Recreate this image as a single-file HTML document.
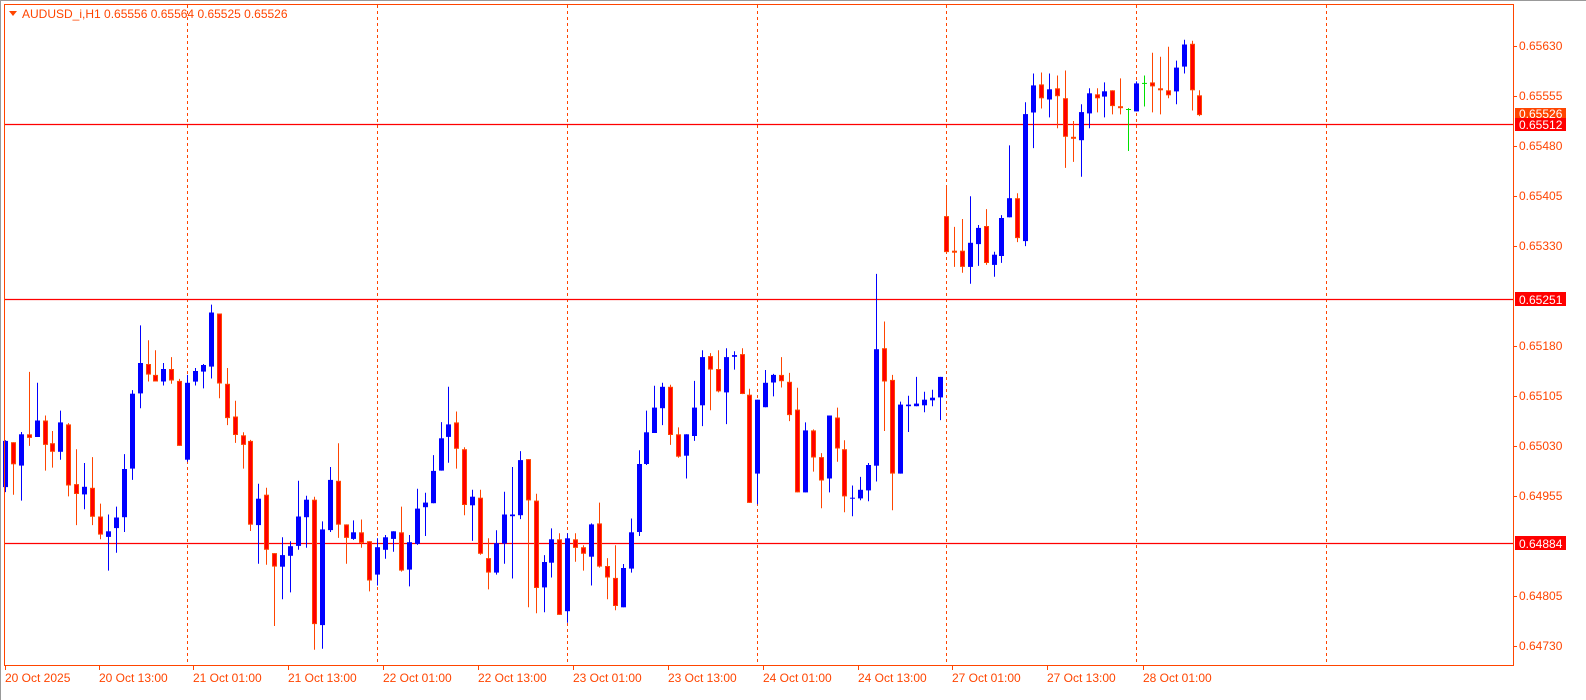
<!DOCTYPE html>
<html><head><meta charset="utf-8"><style>
html,body{margin:0;padding:0;background:#fff;width:1586px;height:700px;overflow:hidden}
svg{display:block;font-family:"Liberation Sans",Arial,sans-serif;font-size:12px}
</style></head><body>
<svg id="s" width="1586" height="700" xmlns="http://www.w3.org/2000/svg">
<rect x="0" y="0" width="1586" height="700" fill="#fff"/>
<line x1="0" y1="0.5" x2="1586" y2="0.5" stroke="#999"/>
<line x1="0.5" y1="0" x2="0.5" y2="700" stroke="#999"/>
<g stroke="#ff4500" stroke-dasharray="3,3" stroke-width="1">
<line x1="187.5" y1="5" x2="187.5" y2="665"/><line x1="377.5" y1="5" x2="377.5" y2="665"/>
<line x1="567.5" y1="5" x2="567.5" y2="665"/><line x1="757.5" y1="5" x2="757.5" y2="665"/>
<line x1="946.5" y1="5" x2="946.5" y2="665"/><line x1="1136.5" y1="5" x2="1136.5" y2="665"/>
<line x1="1326.5" y1="5" x2="1326.5" y2="665"/>
</g>
<g stroke="#ff0000" stroke-width="1.2">
<line x1="4" y1="124.5" x2="1513" y2="124.5"/><line x1="4" y1="299.5" x2="1513" y2="299.5"/><line x1="4" y1="543.5" x2="1513" y2="543.5"/>
</g>
<g id="c"></g>
<rect x="4.5" y="4.5" width="1509" height="661" fill="none" stroke="#ff4500"/>
<g stroke="#ff4500">
<line x1="1513" y1="46.5" x2="1517" y2="46.5"/><line x1="1513" y1="96.5" x2="1517" y2="96.5"/><line x1="1513" y1="146.5" x2="1517" y2="146.5"/><line x1="1513" y1="196.5" x2="1517" y2="196.5"/><line x1="1513" y1="246.5" x2="1517" y2="246.5"/><line x1="1513" y1="346.5" x2="1517" y2="346.5"/><line x1="1513" y1="396.5" x2="1517" y2="396.5"/><line x1="1513" y1="446.5" x2="1517" y2="446.5"/><line x1="1513" y1="496.5" x2="1517" y2="496.5"/><line x1="1513" y1="596.5" x2="1517" y2="596.5"/><line x1="1513" y1="646.5" x2="1517" y2="646.5"/>
<line x1="5.5" y1="665" x2="5.5" y2="670"/><line x1="99.5" y1="665" x2="99.5" y2="670"/><line x1="193.5" y1="665" x2="193.5" y2="670"/><line x1="288.5" y1="665" x2="288.5" y2="670"/><line x1="383.5" y1="665" x2="383.5" y2="670"/><line x1="478.5" y1="665" x2="478.5" y2="670"/><line x1="573.5" y1="665" x2="573.5" y2="670"/><line x1="668.5" y1="665" x2="668.5" y2="670"/><line x1="763.5" y1="665" x2="763.5" y2="670"/><line x1="858.5" y1="665" x2="858.5" y2="670"/><line x1="952.5" y1="665" x2="952.5" y2="670"/><line x1="1047.5" y1="665" x2="1047.5" y2="670"/><line x1="1143.5" y1="665" x2="1143.5" y2="670"/>
</g>
<g fill="#ff4500">
<text x="1519" y="50">0.65630</text><text x="1519" y="100">0.65555</text><text x="1519" y="150">0.65480</text><text x="1519" y="200">0.65405</text><text x="1519" y="250">0.65330</text><text x="1519" y="350">0.65180</text><text x="1519" y="400">0.65105</text><text x="1519" y="450">0.65030</text><text x="1519" y="500">0.64955</text><text x="1519" y="600">0.64805</text><text x="1519" y="650">0.64730</text>
<text x="5" y="682">20 Oct 2025</text><text x="99" y="682">20 Oct 13:00</text><text x="193" y="682">21 Oct 01:00</text><text x="288" y="682">21 Oct 13:00</text><text x="383" y="682">22 Oct 01:00</text><text x="478" y="682">22 Oct 13:00</text><text x="573" y="682">23 Oct 01:00</text><text x="668" y="682">23 Oct 13:00</text><text x="763" y="682">24 Oct 01:00</text><text x="858" y="682">24 Oct 13:00</text><text x="952" y="682">27 Oct 01:00</text><text x="1047" y="682">27 Oct 13:00</text><text x="1143" y="682">28 Oct 01:00</text>
<text x="22" y="18">AUDUSD_i,H1  0.65556 0.65564 0.65525 0.65526</text>
</g>
<path d="M9 11 L17 11 L13 16 Z" fill="#ff4500"/>
<rect x="1515" y="108" width="51" height="12" fill="#ff4500"/>
<text x="1519" y="118" fill="#fff">0.65526</text>
<rect x="1515" y="118" width="51" height="13" fill="#ff0000"/>
<text x="1519" y="129" fill="#fff">0.65512</text>
<rect x="1515" y="292" width="51" height="14" fill="#ff0000"/>
<text x="1519" y="304" fill="#fff">0.65251</text>
<rect x="1515" y="536" width="51" height="14" fill="#ff0000"/>
<text x="1519" y="548" fill="#fff">0.64884</text>
</svg>
<script>
var d1=[["b",467,607,465,622],["r",471,538,471,630],["b",447,542,440,648],["r",447,458,258,482],["b",405,455,291,455],["r",405,479,390,557],["r",474,500,437,548],["b",411,500,375,524],["r",417,602,413,635],["r",598,628,492,722],["b",606,629,534,674],["r",609,697,516,722],["r",696,751,657,765],["b",741,758,690,860],["b",699,731,666,806],["b",552,698,507,743],["b",324,551,313,585],["b",231,323,117,368],["r",234,266,162,287],["r",267,287,192,287],["b",249,287,231,299],["r",249,284,213,294],["r",285,482,279,482],["b",291,524,267,530],["b",255,287,246,299],["b",237,257,234,308],["b",78,242,54,278],["r",81,293,81,338],["r",294,398,246,419],["r",393,449,345,473],["r",450,479,441,551],["r",467,721,464,740],["b",642,722,597,839],["r",630,797,609,842],["r",807,848,807,1028],["b",813,848,759,947],["b",786,815,771,926],["b",696,785,588,797],["b",645,698,633,791],["r",645,1022,636,1100],["b",735,1025,711,1097],["b",585,737,546,743],["r",588,721,474,761],["r",720,761,720,839],["b",744,764,708,767],["r",744,776,705,791],["r",771,890,771,923],["b",789,872,762,905],["b",759,797,752,824],["b",741,764,741,803],["r",744,860,666,863],["b",774,857,752,908],["b",672,779,612,782],["b",654,668,624,755],["b",558,656,510,656],["b",459,557,410,557],["b",417,455,303,533],["r",411,491,378,551],["r",492,661,486,692],["b",636,662,615,770]];
var d2=[["r",729,899,705,902],["r",912,956,852,1007],["b",867,956,828,962],["b",780,868,711,929],["b",780,785,636,974],["b",615,782,588,794],["r",612,737,612,1061],["r",738,1003,717,1079],["b",924,1001,903,1076],["b",855,926,822,971],["r",855,1084,837,1084],["b",852,1073,837,1108],["r",855,881,837,923],["r",879,899,873,950],["b",810,908,807,995],["r",807,938,744,941],["r",936,971,912,1037],["r",972,1057,873,1070],["b",942,1061,930,1061],["b",834,944,792,956],["b",627,833,585,845],["b",531,627,465,630],["b",456,533,390,533],["b",393,458,381,509],["r",393,539,387,569],["r",537,605,516,608],["b",537,602,537,671],["b",456,542,375,557],["b",303,449,282,512],["r",300,341,291,464],["r",339,407,282,410],["b",303,410,276,506],["b",297,302,285,341],["r",294,415,276,415],["r",417,745,399,745],["b",432,656,432,749],["b",381,455,342,455],["b",357,380,354,422],["r",357,376,303,395],["r",378,479,351,497],["r",462,713,396,713],["b",525,713,501,713],["r",525,607,522,650],["r",606,677,594,761],["b",480,671,480,713],["r",486,580,456,620],["r",582,725,555,773],["b",729,732,692,785],["b",705,731,666,737],["b",630,707,624,740],["b",279,632,51,680],["r",276,377,195,527],["r",372,656,357,767],["b",447,656,438,656],["b",447,452,420,530],["b",444,452,363,452],["b",432,449,408,470],["b",426,434,402,452],["b",363,425,363,494]];
var d3=[["r",565,674,475,674],["r",670,674,598,719],["r",670,719,574,737],["b",646,719,505,770],["b",601,650,592,716],["r",595,707,544,713],["b",682,713,673,749],["b",571,686,562,707],["b",511,569,351,569],["r",511,632,496,644],["b",256,641,220,656],["b",169,251,133,359],["r",166,208,130,239],["b",181,212,133,266],["r",178,202,139,299],["r",208,325,124,419],["r",325,331,277,401],["b",250,335,226,446],["b",193,254,178,299],["r",196,208,178,251],["b",187,203,160,266],["r",184,232,184,257],["r",232,236,148,257],["g",242,242,238,368],["b",163,248,157,248],["g",163,163,139,233],["r",160,172,70,251],["r",178,184,82,257],["r",184,199,52,208],["b",115,187,94,226],["b",45,112,31,133],["r",43,184,34,245],["r",199,259,184,262]];
var g=document.getElementById("c"),ns="http://www.w3.org/2000/svg",h="";
function add(arr,off,start,xo){for(var k=0;k<arr.length;k++){var c=arr[k],i=start+k,x=Math.round(4.95+7.92*i+xo);
var y1=off+c[1]*.33,y2=off+c[2]*.33,w1=off+c[3]*.33,w2=off+c[4]*.33;
var col=c[0]=="b"?"#0000ff":(c[0]=="g"?"#00e000":"#ff4500");
h+='<line x1="'+(x+.5)+'" y1="'+w1.toFixed(1)+'" x2="'+(x+.5)+'" y2="'+w2.toFixed(1)+'" stroke="'+col+'" stroke-width="1"/>';
var bh=Math.max(y2-y1,1);
if(c[0]=="b")h+='<rect x="'+(x-2)+'" y="'+y1.toFixed(1)+'" width="5" height="'+bh.toFixed(1)+'" fill="#0000ff"/>';
else if(c[0]=="g")h+='<line x1="'+(x-2)+'" y1="'+y1.toFixed(1)+'" x2="'+(x+3)+'" y2="'+y1.toFixed(1)+'" stroke="#00e000"/>';
else h+='<rect x="'+(x-1.5)+'" y="'+(y1+.5).toFixed(1)+'" width="4" height="'+Math.max(bh-1,1).toFixed(1)+'" fill="#ff0000" stroke="#ff4500" stroke-width="1"/>';}}
add(d1,286.8,0,0);add(d2,257.1,60,0);add(d3,29.6,119,-1.4);
g.innerHTML=h;
</script>
</body></html>
